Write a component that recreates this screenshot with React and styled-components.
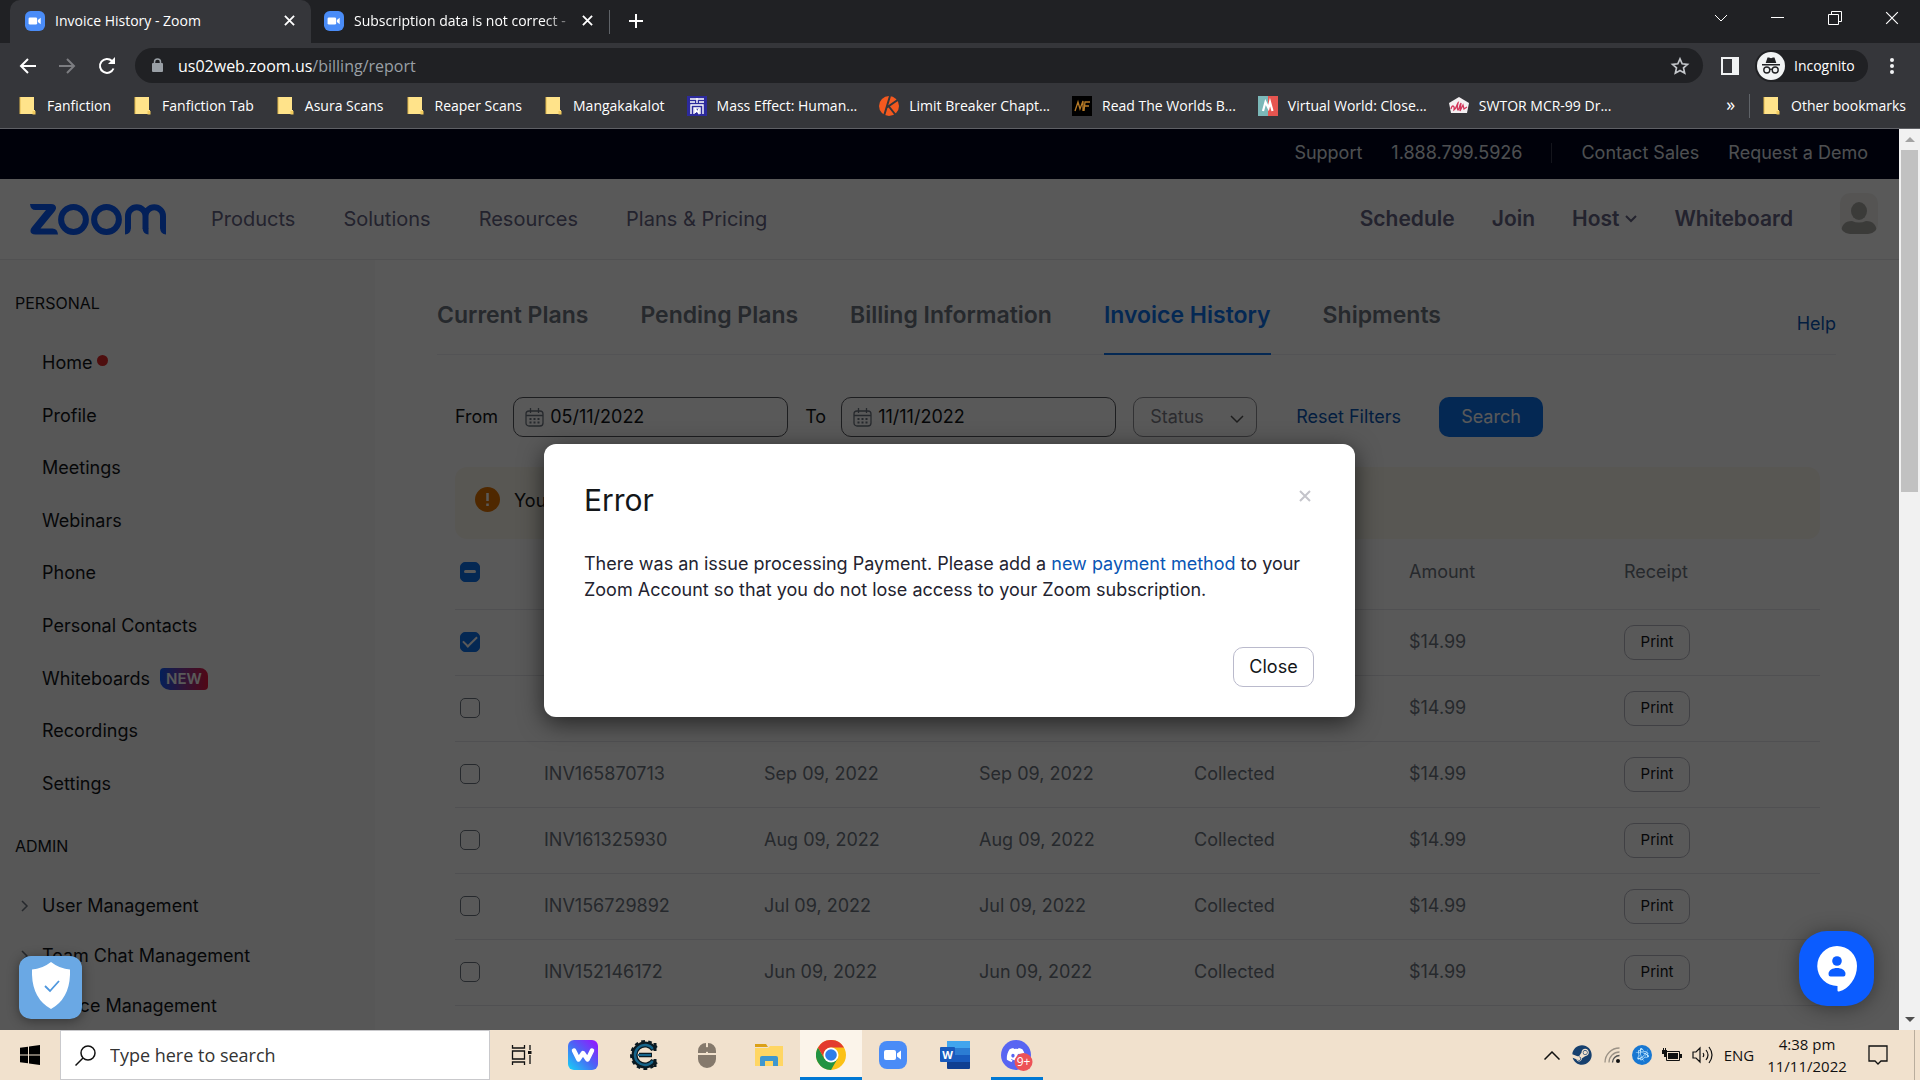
import React, { useEffect, useRef } from 'react'
import styled, { createGlobalStyle, css } from 'styled-components'
import { FaDiscord, FaSteam, FaBattleNet } from 'react-icons/fa'

const GlobalStyle = createGlobalStyle`
    * {
        box-sizing: border-box;
    }

    body {
        margin: 0;
        overflow: hidden;
    }

    button, input, select {
        font: inherit;
        color: inherit;
        margin: 0;
    }

    button {
        background: none;
        border: 0;
        padding: 0;
    }

    a {
        color: inherit;
        text-decoration: none;
    }

    svg {
        display: block;
        flex: none;
    }
`

const Screen = styled.div`
    height: 100vh;
    display: flex;
    flex-direction: column;
    font-family: 'Open Sans', 'Noto Sans', sans-serif;
`

/* ---------- browser ---------- */

const TabStrip = styled.div`
    height: 43px;
    flex: none;
    display: flex;
    align-items: stretch;
    padding-left: 10px;
    background: #202124;
    color: #fff;
    font-size: 14px;
`

const Tab = styled.div`
    width: ${(props) => (props.$active ? 301 : 298)}px;
    display: flex;
    align-items: center;
    gap: 10px;
    padding: 0 14px 2px ${(props) => (props.$active ? 15 : 13)}px;
    border-radius: 10px 10px 0 0;
    background: ${(props) => (props.$active ? '#35363a' : 'transparent')};
`

const TabTitle = styled.span`
    flex: 1;
    min-width: 0;
    overflow: hidden;
    white-space: nowrap;
    ${(props) => props.$fade && css`
        mask-image: linear-gradient(to right, #000 88%, rgba(0, 0, 0, 0.3));
    `}
`

const TabClose = styled.button`
    width: 16px;
    height: 16px;
    display: grid;
    place-items: center;
`

const NewTab = styled.button`
    width: 54px;
    padding-bottom: 2px;
    display: grid;
    place-items: center;
    position: relative;

    &::before {
        content: '';
        position: absolute;
        left: 0;
        top: 10px;
        height: 24px;
        width: 1px;
        background: #5f6368;
    }
`

const WindowControls = styled.div`
    margin-left: auto;
    display: flex;
`

const WindowButton = styled.button`
    width: 57px;
    height: 36px;
    display: grid;
    place-items: center;
`

const Toolbar = styled.div`
    height: 45px;
    flex: none;
    display: flex;
    align-items: center;
    padding: 0 8px 0 7px;
    background: #35363a;
    color: #fff;
`

const ToolButton = styled.button`
    width: 40px;
    height: 32px;
    display: grid;
    place-items: center;
`

const Omnibox = styled.div`
    flex: 1;
    height: 35px;
    margin: 0 18px 0 8px;
    padding: 0 13px 0 17px;
    display: flex;
    align-items: center;
    gap: 15px;
    border-radius: 18px;
    background: #202124;
    font-size: 16px;
    color: #9aa0a6;
`

const Address = styled.span`
    flex: 1;

    b {
        font-weight: 400;
        color: #fff;
    }
`

const Incognito = styled.button`
    height: 32px;
    width: 113px;
    margin: 0 4px 0 16px;
    padding: 0 2px;
    display: flex;
    align-items: center;
    gap: 9px;
    border-radius: 16px;
    background: #202124;
    font-size: 14px;
`

const Bookmarks = styled.div`
    height: 41px;
    flex: none;
    display: flex;
    align-items: center;
    padding: 0 14px 5px 18px;
    border-bottom: 1px solid #5f6065;
    background: #35363a;
    color: #fff;
    font-size: 14px;
`

const Bookmark = styled.a`
    display: flex;
    align-items: center;
    gap: 10px;
    margin-right: 22px;
    white-space: nowrap;

    &:last-child {
        margin-right: 0;
    }
`

const More = styled.button`
    margin-left: auto;
    margin-right: 12px;
    padding: 0 14px 4px;
    height: 24px;
    border-right: 1px solid #5f6368;
    line-height: 18px;
    font-size: 18px;
`

/* ---------- web page ---------- */

const Viewport = styled.div`
    flex: 1;
    min-height: 0;
    display: flex;
`

const Page = styled.div`
    flex: 1;
    min-width: 0;
    position: relative;
    overflow: hidden;
    background: #fff;
    color: #131619;
    font-family: Inter, 'Liberation Sans', sans-serif;
    font-size: 18px;
    line-height: 26px;
`

const TopBar = styled.div`
    height: 50px;
    display: flex;
    align-items: center;
    justify-content: flex-end;
    gap: 29px;
    padding: 0 31px 3px 0;
    background: #00031f;
    color: #dfe3e8;
`

const Divider = styled.span`
    width: 1px;
    height: 20px;
    background: #3a3c50;
`

const Nav = styled.nav`
    height: 81px;
    display: flex;
    align-items: center;
    padding: 0 21px 0 30px;
    border-bottom: 1px solid #e8e8ec;
    background: #fff;
    font-size: 20px;
    color: #666484;
`

const NavLinks = styled.div`
    display: flex;
    gap: 48px;
    margin-left: 44px;
`

const NavActions = styled.div`
    display: flex;
    align-items: center;
    gap: 37px;
    margin-left: auto;
    font-size: 21px;
    font-weight: 600;

    a {
        display: flex;
        align-items: center;
        gap: 6px;
    }
`

const Avatar = styled.button`
    width: 38px;
    height: 41px;
    margin: 0 0 12px 10px;
    border-radius: 10px;
    overflow: hidden;
    background: #f2f1ee;
`

const Columns = styled.div`
    display: flex;
    align-items: stretch;
`

const Sidebar = styled.aside`
    width: 375px;
    flex: none;
    padding-top: 30px;
    background: #f8f8f9;
`

const SideHeading = styled.h2`
    margin: 0;
    padding: 0 15px;
    font-size: 16px;
    font-weight: 400;
    line-height: 26px;
`

const SideList = styled.ul`
    list-style: none;
    margin: ${(props) => (props.$nested ? 22 : 21)}px 0 23px;
    padding: 0;
    display: grid;
    grid-auto-rows: 1fr;
    min-height: ${(props) => (props.$nested ? 150 : 473)}px;
`

const SideItem = styled.li`
    display: grid;
    grid-template-columns: 24px auto auto 1fr;
    align-items: center;
    padding-left: 18px;
`

const Dot = styled.span`
    width: 11px;
    height: 11px;
    margin: 0 0 6px 5px;
    border-radius: 50%;
    background: #e02828;
`

const NewBadge = styled.span`
    margin-left: 10px;
    padding: 0 6px;
    border-radius: 4px 8px 4px 10px;
    background: linear-gradient(90deg, #0b5cff, #8a3a9a 50%, #e8173d);
    color: #fff;
    font-size: 15px;
    font-weight: 600;
    line-height: 22px;
`

const Main = styled.main`
    flex: 1;
    min-width: 0;
    padding: 30px 63px 0 62px;
`

const Tabs = styled.div`
    display: flex;
    gap: 52px;
    height: 65px;
    border-bottom: 1px solid #eeeef2;
    color: #6e7680;
    font-size: 23px;
    font-weight: 600;
    line-height: 50px;

    a {
        height: 65px;
    }
`

const ActiveTab = styled.a`
    border-bottom: 2px solid #0e72ed;
    color: #0e72ed;
`

const HelpLink = styled.a`
    margin-left: auto;
    padding-top: 9px;
    color: #0956b5;
    font-size: 18px;
    font-weight: 400;
`

const Body = styled.div`
    padding: 42px 16px 0 18px;
`

const Filters = styled.form`
    display: flex;
    align-items: center;
    height: 40px;
`

const DateBox = styled.span`
    width: 275px;
    min-width: 0;
    height: 40px;
    margin: 0 17px 0 15px;
    padding-left: 11px;
    display: flex;
    align-items: center;
    gap: 6px;
    border: 1px solid #55565c;
    border-radius: 10px;

    input {
        flex: 1;
        min-width: 0;
        border: 0;
        padding: 0;
        background: none;
        outline: 0;
    }
`

const SelectBox = styled.span`
    width: 124px;
    height: 40px;
    position: relative;
    color: #7c7d86;

    select {
        appearance: none;
        width: 100%;
        height: 100%;
        padding: 0 16px;
        border: 1px solid #909096;
        border-radius: 10px;
        background: none;
    }

    svg {
        position: absolute;
        right: 13px;
        top: 18px;
        color: #555;
    }
`

const Reset = styled.a`
    margin: 0 38px 0 39px;
    color: #0956b5;
`

const SearchButton = styled.button`
    width: 104px;
    height: 40px;
    border-radius: 10px;
    background: #0e72ed;
    color: #fff;
`

const Notice = styled.div`
    height: 72px;
    margin-top: 30px;
    padding: 0 20px 8px;
    display: flex;
    align-items: center;
    gap: 14px;
    border-radius: 12px;
    background: #fdf8ee;

    span {
        padding-top: 4px;
    }
`

const Table = styled.table`
    width: 100%;
    table-layout: fixed;
    border-collapse: collapse;
    color: #6e7680;

    th {
        height: 70px;
        font-weight: 400;
        text-align: left;
        padding: 0 0 4px;
        border-bottom: 1px solid #e4e4ea;
    }

    td {
        height: 66px;
        padding: 0;
        border-bottom: 1px solid #e4e4ea;
    }
`

const Col = styled.col`
    width: ${(props) => props.$width}px;
`

const Checkbox = styled.input.attrs({ type: 'checkbox' })`
    appearance: none;
    display: grid;
    place-items: center;
    width: 20px;
    height: 20px;
    margin-left: 5px;
    border: 1px solid #6e7680;
    border-radius: 5px;

    &:checked,
    &:indeterminate {
        border-color: #0e72ed;
        background: #0e72ed;
    }

    &:checked::after {
        content: '';
        width: 12px;
        height: 6px;
        margin-bottom: 4px;
        border: solid #fff;
        border-width: 0 0 2px 2px;
        transform: rotate(-45deg);
    }

    &:indeterminate::after {
        content: '';
        width: 12px;
        height: 3px;
        margin: 0;
        border: 0;
        border-radius: 2px;
        background: #fff;
        transform: none;
    }
`

const PrintButton = styled.button`
    display: block;
    width: 66px;
    height: 35px;
    border: 1px solid #b8b8c2;
    border-radius: 10px;
    color: #131619;
    font-size: 15px;
`

const Overlay = styled.div`
    position: absolute;
    inset: 0;
    display: flex;
    align-items: flex-start;
    justify-content: center;
    padding-top: 315px;
    background: rgba(0, 0, 0, 0.65);
`

const Dialog = styled.section`
    width: 811px;
    padding: 39px 41px 30px 40px;
    border-radius: 12px;
    background: #fff;
    box-shadow: 0 6px 24px rgba(0, 0, 0, 0.6);

    h1 {
        margin: 0;
        font-size: 30px;
        font-weight: 400;
        line-height: 34px;
    }

    p {
        margin: 34px 0 44px;
        color: #23232f;
    }

    p a {
        color: #0956b5;
    }
`

const DialogHead = styled.header`
    display: flex;
    justify-content: space-between;
    align-items: flex-start;
`

const DialogClose = styled.button`
    width: 18px;
    height: 26px;
    display: grid;
    place-items: center;
    color: #c4c4ca;
`

const CloseButton = styled.button`
    display: block;
    width: 81px;
    height: 40px;
    margin-left: auto;
    border: 1px solid #babacc;
    border-radius: 10px;
`

const ShieldButton = styled.button`
    position: absolute;
    left: 19px;
    bottom: 11px;
    width: 63px;
    height: 63px;
    padding-bottom: 5px;
    display: grid;
    place-items: center;
    border-radius: 12px;
    background: #6aa8e4;
    box-shadow: 0 2px 12px rgba(0, 0, 0, 0.4);
`

const ChatButton = styled.button`
    position: absolute;
    right: 25px;
    bottom: 24px;
    width: 75px;
    height: 75px;
    display: grid;
    place-items: center;
    border-radius: 28px;
    background: #0b5cff;
    box-shadow: 0 2px 20px rgba(0, 0, 0, 0.4);
`

const Scrollbar = styled.div`
    width: 21px;
    flex: none;
    display: grid;
    grid-template-rows: 21px 1fr 21px;
    justify-items: center;
    align-items: center;
    background: #f1f1f1;
`

const Thumb = styled.div`
    align-self: start;
    width: 17px;
    height: 342px;
    background: #c1c1c1;
`

/* ---------- taskbar ---------- */

const Taskbar = styled.footer`
    height: 50px;
    flex: none;
    display: flex;
    align-items: stretch;
    background: #f1e1cd;
    color: #111;
`

const TaskButton = styled.button`
    width: ${(props) => props.$width || 62}px;
    display: grid;
    place-items: center;
    background: ${(props) => (props.$active ? '#fbf4ea' : 'none')};
    box-shadow: ${(props) => (props.$active ? 'inset 0 -3px #0078d4' : 'none')};
`

const RunningMark = styled(TaskButton)`
    width: 52px;
    margin: 0 5px;
    box-shadow: inset 0 -3px #0078d4;
`

const SearchField = styled.label`
    width: 430px;
    display: flex;
    align-items: center;
    gap: 14px;
    padding-left: 14px;
    border: 1px solid #c9c9cc;
    background: #fff;
    font-size: 18px;

    input {
        flex: 1;
        border: 0;
        padding: 0;
        outline: 0;
        background: none;
    }

    input::placeholder {
        color: #333;
    }
`

const Tray = styled.div`
    margin-left: auto;
    display: flex;
    align-items: center;
    font-size: 15px;
`

const TrayButton = styled.button`
    width: ${(props) => props.$width || 30}px;
    display: grid;
    place-items: center;
`

const Clock = styled.div`
    width: 92px;
    margin-right: 10px;
    text-align: center;
    line-height: 22px;
`

const DesktopEdge = styled.div`
    align-self: stretch;
    width: 6px;
    margin-left: 21px;
    border-left: 1px solid #b9ad9d;
`

/* ---------- drawings ---------- */

const ZoomIcon = ({ size }) => (
    <svg width={size} height={size} viewBox="0 0 28 28">
        <rect width="28" height="28" rx="8" fill="#4a8cf7" />
        <rect x="5" y="9" width="12" height="10" rx="2" fill="#fff" />
        <path d="M18 12.5l4-3v9l-4-3z" fill="#fff" />
    </svg>
)

const Cross = ({ size, width = 2 }) => (
    <svg width={size} height={size} viewBox="0 0 12 12" fill="none" stroke="currentColor" strokeWidth={width}>
        <path d="M1 1l10 10M11 1L1 11" />
    </svg>
)

const Chevron = ({ width = 12, stroke = 2 }) => (
    <svg width={width} height={width / 2 + 2} viewBox={`0 0 ${width} ${width / 2 + 2}`} fill="none" stroke="currentColor" strokeWidth={stroke}>
        <path d={`M1 1L${width / 2} ${width / 2}L${width - 1} 1`} />
    </svg>
)

const Folder = () => (
    <svg width="19" height="20" viewBox="0 0 19 20">
        <path d="M2 1h14v13h1v4h-15z" fill="#ffe38a" />
        <path d="M2 18V1" stroke="#e0b84c" />
        <path d="M2 18.5h12.5v-3.5h3v3.5z" fill="#f3cb5e" />
    </svg>
)

const ZoomLogo = () => (
    <svg width="137" height="31" viewBox="0 0 137 31" fill="#0b5cff">
        <path d="M0 0h21c5 0 6.500 4 3.500 7.500L10.500 24.500H22.500q5 0 5.500 6H5.500C0 30.500-1 26.500 2.500 22.500L16 6H5.500Q.5 6 0 0z" />
        <g fill="none" stroke="#0b5cff" strokeWidth="6">
            <circle cx="43.500" cy="15.500" r="12.400" />
            <circle cx="76.500" cy="15.500" r="12.400" />
            <path d="M98 24.500V12a8.750 8.750 0 0 1 17.500 0V24.500M115.500 12a8.750 8.750 0 0 1 17.500 0V24.500" />
        </g>
        <path d="M95 24h6q-.5 6-6 6.500zM112.500 24h6v6.500q-5.500-.5-6-6.500zM130 24h6v6.500q-5.500-.5-6-6.500z" />
    </svg>
)

const Calendar = () => (
    <svg width="19" height="19" viewBox="0 0 19 19" fill="none" stroke="#6e7680" strokeWidth="1.3">
        <rect x="1" y="3" width="17" height="15" rx="3" />
        <path d="M1 7.500h17M5.500 0v5M13.500 0v5" />
        <path d="M4.500 11h2M8.500 11h2M12.500 11h2M4.500 14.500h2M8.500 14.500h2M12.500 14.500h2" strokeWidth="2" />
    </svg>
)

const Gear = () => (
    <svg width="30" height="30" viewBox="0 0 30 30" fill="none">
        <path d="M26 8A13 13 0 1 0 26 22" stroke="#0b1a22" strokeWidth="4" strokeDasharray="3.500 3" />
        <path d="M24 9.500A10.500 10.500 0 1 0 24 20.500" stroke="#0b1a22" strokeWidth="6" />
        <path d="M23 9A10 10 0 1 0 23 21" stroke="#16648a" strokeWidth="2.500" />
        <path d="M9 15h13" stroke="#0b1a22" strokeWidth="4.500" />
        <path d="M8 15h13" stroke="#16648a" strokeWidth="2" />
        <path d="M25 3v8M25 19v8" stroke="#0b1a22" strokeWidth="3" />
    </svg>
)

const Chrome = () => (
    <svg width="30" height="30" viewBox="0 0 30 30">
        <circle cx="15" cy="15" r="15" fill="#fbc116" />
        <path d="M2 7.500A15 15 0 0 0 15 30l6.500-11.200L15 15 8.500 18.700z" fill="#229342" />
        <path d="M2 7.500A15 15 0 0 1 28 7.500H15a7.500 7.500 0 0 0-6.500 11.200z" fill="#e33b2e" />
        <circle cx="15" cy="15" r="7.500" fill="#fff" />
        <circle cx="15" cy="15" r="5.800" fill="#2f7de9" />
    </svg>
)

const Wattpad = () => (
    <svg width="30" height="30" viewBox="0 0 30 30">
        <defs>
            <linearGradient id="wattpad" x1="0" y1="1" x2="1" y2="0">
                <stop offset="0" stopColor="#16d4f5" />
                <stop offset="0.5" stopColor="#4a66f5" />
                <stop offset="1" stopColor="#9a10ff" />
            </linearGradient>
        </defs>
        <rect width="30" height="30" rx="6" fill="url(#wattpad)" />
        <path d="M6 10.500l4.500 9L15 13l4.500 6.500 4.500-9" fill="none" stroke="#fff" strokeWidth="4.500" strokeLinecap="round" strokeLinejoin="round" />
    </svg>
)

const Mouse = () => (
    <svg width="18" height="25" viewBox="0 0 18 25" fill="#85796c">
        <path d="M8 0v10H0V8a8 8 0 0 1 8-8zM10 0a8 8 0 0 1 8 8v2h-8zM0 12h18v4a9 9 0 0 1-18 0z" />
        <rect x="7" y="4" width="4" height="5" rx="2" />
    </svg>
)

const Explorer = () => (
    <svg width="28" height="24" viewBox="0 0 28 24">
        <path d="M0 1h11l2 3h-13z" fill="#dba017" />
        <path d="M0 5h13l2-2h13v20H0z" fill="#ffd663" />
        <path d="M5 23v-8a2 2 0 0 1 2-2h14a2 2 0 0 1 2 2v8h-5v-5h-8v5z" fill="#3f97cf" />
    </svg>
)

const Word = () => (
    <svg width="30" height="28" viewBox="0 0 30 28">
        <rect x="7" width="23" height="28" rx="1" fill="#103f91" />
        <path d="M7 0h23v7H7z" fill="#41a5ee" />
        <path d="M7 7h23v7H7z" fill="#2b7cd3" />
        <path d="M7 14h23v7H7z" fill="#185abd" />
        <rect y="6" width="15" height="15" rx="1" fill="#185abd" />
        <text x="7.500" y="18" fill="#fff" fontSize="11" fontWeight="700" textAnchor="middle" fontFamily="Open Sans">W</text>
    </svg>
)

const Discord = () => (
    <svg width="32" height="31" viewBox="0 0 32 31">
        <circle cx="15" cy="15" r="15" fill="#5865f2" />
        <FaDiscord x="5" y="5" size="20" color="#fff" />
        <circle cx="22.500" cy="22" r="9" fill="#ed5257" />
        <text x="22.500" y="26" fill="#fff" fontSize="12" textAnchor="middle" fontFamily="Open Sans">9+</text>
    </svg>
)

const MassEffect = () => (
    <svg width="20" height="20" viewBox="0 0 20 20" fill="none" stroke="#fff" strokeWidth="1.400">
        <rect width="20" height="20" fill="#2c2a9c" stroke="none" />
        <path d="M3 3h14M3 6h5M12 6h5M10 2v5M4 18V9h12v9M7 18v-6h6v6M8.500 17v-4l3 4v-4" />
    </svg>
)

const Limit = () => (
    <svg width="20" height="20" viewBox="0 0 20 20">
        <circle cx="10" cy="10" r="10" fill="#f4591f" />
        <path d="M11 0L5 20M20 3L7 12M9.500 10l8 10" stroke="#35363a" strokeWidth="2" />
    </svg>
)

const ReadWorlds = () => (
    <svg width="20" height="20" viewBox="0 0 20 20">
        <rect width="20" height="20" fill="#000" />
        <path d="M3 15L6 6l2 7 3-8v10M12 15l1-9h5M13 10h4" fill="none" stroke="#b67a27" strokeWidth="1.300" />
    </svg>
)

const VirtualWorld = () => (
    <svg width="20" height="20" viewBox="0 0 20 20">
        <rect width="10" height="20" fill="#7bb8b8" />
        <rect x="10" width="10" height="20" fill="#e65550" />
        <path d="M5 15L7.500 6 10.500 12 12 6l2.500 9" fill="none" stroke="#fff" strokeWidth="2.200" />
    </svg>
)

const Swtor = () => (
    <svg width="20" height="17" viewBox="0 0 20 17">
        <path d="M10 0l10 6-2 10H2L0 6z" fill="#f4f0f2" />
        <path d="M2 12c1-5 4-3 3 1 2-1 3-6 4-7-1 4-1 6 0 7 2-2 1-4 3-7l-1 8 3-6 1 4 3-2" fill="none" stroke="#d3365b" strokeWidth="1.300" />
    </svg>
)

const IncognitoIcon = () => (
    <svg width="28" height="28" viewBox="0 0 28 28">
        <circle cx="14" cy="14" r="14" fill="#f1f3f4" />
        <path d="M10.500 5.500h1.500l2 .8 2-.8h1.500l1.800 5.500h-10.600zM5 12h18v1.500H5z" fill="#202124" />
        <g fill="none" stroke="#202124" strokeWidth="1.400">
            <circle cx="9.800" cy="18" r="3" />
            <circle cx="18.200" cy="18" r="3" />
            <path d="M12.800 17.500q1.200-.8 2.400 0" />
        </g>
    </svg>
)

/* ---------- data ---------- */

const bookmarks = [
    ['Fanfiction', Folder],
    ['Fanfiction Tab', Folder],
    ['Asura Scans', Folder],
    ['Reaper Scans', Folder],
    ['Mangakakalot', Folder],
    ['Mass Effect: Human...', MassEffect],
    ['Limit Breaker Chapt...', Limit],
    ['Read The Worlds B...', ReadWorlds],
    ['Virtual World: Close...', VirtualWorld],
    ['SWTOR MCR-99 Dr...', Swtor],
]

const personal = ['Home', 'Profile', 'Meetings', 'Webinars', 'Phone', 'Personal Contacts', 'Whiteboards', 'Recordings', 'Settings']
const admin = ['User Management', 'Team Chat Management', 'Device Management']

const invoices = [
    { checked: true },
    {},
    { number: 'INV165870713', date: 'Sep 09, 2022', status: 'Collected' },
    { number: 'INV161325930', date: 'Aug 09, 2022', status: 'Collected' },
    { number: 'INV156729892', date: 'Jul 09, 2022', status: 'Collected' },
    { number: 'INV152146172', date: 'Jun 09, 2022', status: 'Collected' },
]

/* ---------- sections ---------- */

const Browser = () => (
    <>
        <TabStrip>
            <Tab $active>
                <ZoomIcon size={20} />
                <TabTitle>Invoice History - Zoom</TabTitle>
                <TabClose aria-label="Close tab"><Cross size={11} /></TabClose>
            </Tab>
            <Tab>
                <ZoomIcon size={20} />
                <TabTitle $fade>Subscription data is not correct -</TabTitle>
                <TabClose aria-label="Close tab"><Cross size={11} /></TabClose>
            </Tab>
            <NewTab aria-label="New tab">
                <svg width="14" height="14" viewBox="0 0 14 14" stroke="#fff" strokeWidth="2"><path d="M7 0v14M0 7h14" /></svg>
            </NewTab>
            <WindowControls>
                <WindowButton aria-label="Search tabs"><Chevron width={14} stroke={1} /></WindowButton>
                <WindowButton aria-label="Minimize">
                    <svg width="13" height="2"><rect width="13" height="1" fill="#fff" /></svg>
                </WindowButton>
                <WindowButton aria-label="Restore">
                    <svg width="14" height="14" viewBox="0 0 14 14" fill="none" stroke="#fff"><path d="M.5 3.500h10v10H.5zM3.500 3V.5h10v10H11" /></svg>
                </WindowButton>
                <WindowButton aria-label="Close"><Cross size={14} width={1} /></WindowButton>
            </WindowControls>
        </TabStrip>
        <Toolbar>
            <ToolButton aria-label="Back">
                <svg width="17" height="16" viewBox="0 0 17 16" fill="none" stroke="#fff" strokeWidth="2"><path d="M17 8H2M9 1L2 8l7 7" /></svg>
            </ToolButton>
            <ToolButton aria-label="Forward">
                <svg width="17" height="16" viewBox="0 0 17 16" fill="none" stroke="#7c7d81" strokeWidth="2"><path d="M0 8h15M8 1l7 7-7 7" /></svg>
            </ToolButton>
            <ToolButton aria-label="Reload">
                <svg width="18" height="18" viewBox="0 0 18 18" fill="none" stroke="#fff" strokeWidth="2"><path d="M15.500 11.500A7 7 0 1 1 14 4l2 2" /><path d="M17 0v7h-7z" fill="#fff" stroke="none" /></svg>
            </ToolButton>
            <Omnibox>
                <svg width="11" height="15" viewBox="0 0 11 15"><path d="M2.500 6V4a3 3 0 0 1 6 0v2" fill="none" stroke="#9aa0a6" strokeWidth="1.500" /><rect y="5" width="11" height="9" rx="1" fill="#9aa0a6" /></svg>
                <Address><b>us02web.zoom.us</b>/billing/report</Address>
                <svg width="20" height="20" viewBox="0 0 24 24" fill="none" stroke="#c4c7cb" strokeWidth="2"><path d="M12 3.500l2.600 5.900 6.400.6-4.800 4.300 1.400 6.300-5.600-3.300-5.600 3.300 1.400-6.300L3 10l6.400-.6z" /></svg>
            </Omnibox>
            <svg width="18" height="18" viewBox="0 0 18 18"><rect x="1" y="1" width="16" height="16" fill="none" stroke="#f1f3f4" strokeWidth="2" /><rect x="11" y="1" width="6" height="16" fill="#f1f3f4" /></svg>
            <Incognito><IncognitoIcon />Incognito</Incognito>
            <ToolButton aria-label="Menu">
                <svg width="4" height="16" viewBox="0 0 4 16" fill="#f1f3f4"><circle cx="2" cy="2" r="2" /><circle cx="2" cy="8" r="2" /><circle cx="2" cy="14" r="2" /></svg>
            </ToolButton>
        </Toolbar>
        <Bookmarks>
            {bookmarks.map(([name, Icon]) => (
                <Bookmark href="#" key={name}><Icon />{name}</Bookmark>
            ))}
            <More aria-label="More bookmarks">»</More>
            <Bookmark href="#"><Folder />Other bookmarks</Bookmark>
        </Bookmarks>
    </>
)

const InvoiceTable = () => {
    const all = useRef(null)

    useEffect(() => {
        all.current.indeterminate = true
    }, [])

    return (
        <Table>
            <colgroup>
                <Col $width={89} />
                <Col $width={220} />
                <Col $width={215} />
                <Col $width={215} />
                <Col $width={215} />
                <Col $width={215} />
                <Col $width={196} />
            </colgroup>
            <thead>
                <tr>
                    <th><Checkbox ref={all} aria-label="Select all" /></th>
                    <th /><th /><th /><th />
                    <th>Amount</th>
                    <th>Receipt</th>
                </tr>
            </thead>
            <tbody>
                {invoices.map((invoice, i) => (
                    <tr key={i}>
                        <td><Checkbox defaultChecked={invoice.checked} aria-label="Select invoice" /></td>
                        <td>{invoice.number}</td>
                        <td>{invoice.date}</td>
                        <td>{invoice.date}</td>
                        <td>{invoice.status}</td>
                        <td>$14.99</td>
                        <td><PrintButton>Print</PrintButton></td>
                    </tr>
                ))}
            </tbody>
        </Table>
    )
}

const Content = () => (
    <Main>
        <Tabs>
            <a href="#">Current Plans</a>
            <a href="#">Pending Plans</a>
            <a href="#">Billing Information</a>
            <ActiveTab href="#">Invoice History</ActiveTab>
            <a href="#">Shipments</a>
            <HelpLink href="#">Help</HelpLink>
        </Tabs>
        <Body>
            <Filters>
                <label htmlFor="from">From</label>
                <DateBox><Calendar /><input id="from" defaultValue="05/11/2022" /></DateBox>
                <label htmlFor="to">To</label>
                <DateBox><Calendar /><input id="to" defaultValue="11/11/2022" /></DateBox>
                <SelectBox>
                    <select aria-label="Status"><option>Status</option></select>
                    <Chevron width={14} stroke={1.5} />
                </SelectBox>
                <Reset href="#">Reset Filters</Reset>
                <SearchButton type="button">Search</SearchButton>
            </Filters>
            <Notice>
                <svg width="25" height="25" viewBox="0 0 25 25">
                    <circle cx="12.500" cy="12.500" r="12.500" fill="#e27400" />
                    <path d="M12.500 6v8M12.500 16.500v2.500" stroke="#fff" strokeWidth="2.500" />
                </svg>
                <span>You</span>
            </Notice>
            <InvoiceTable />
        </Body>
    </Main>
)

const App = () => (
    <Screen>
        <GlobalStyle />
        <Browser />
        <Viewport>
            <Page>
                <TopBar>
                    <a href="#">Support</a>
                    <a href="#">1.888.799.5926</a>
                    <Divider />
                    <a href="#">Contact Sales</a>
                    <a href="#">Request a Demo</a>
                </TopBar>
                <Nav>
                    <a href="#" aria-label="Zoom"><ZoomLogo /></a>
                    <NavLinks>
                        <a href="#">Products</a>
                        <a href="#">Solutions</a>
                        <a href="#">Resources</a>
                        <a href="#">Plans &amp; Pricing</a>
                    </NavLinks>
                    <NavActions>
                        <a href="#">Schedule</a>
                        <a href="#">Join</a>
                        <a href="#">Host <Chevron width={12} /></a>
                        <a href="#">Whiteboard</a>
                        <Avatar aria-label="Account">
                            <svg width="38" height="41" viewBox="0 0 38 41" fill="#a9a8a4"><ellipse cx="19" cy="18" rx="8" ry="9" /><path d="M1 41q0-13 11-13 7 3 14 0 11 0 11 13z" /></svg>
                        </Avatar>
                    </NavActions>
                </Nav>
                <Columns>
                    <Sidebar>
                        <SideHeading>PERSONAL</SideHeading>
                        <SideList>
                            {personal.map((name) => (
                                <SideItem key={name}>
                                    <span />
                                    <a href="#">{name}</a>
                                    {name === 'Home' && <Dot />}
                                    {name === 'Whiteboards' && <NewBadge>NEW</NewBadge>}
                                </SideItem>
                            ))}
                        </SideList>
                        <SideHeading>ADMIN</SideHeading>
                        <SideList $nested>
                            {admin.map((name) => (
                                <SideItem key={name}>
                                    <svg width="12" height="12" viewBox="0 0 12 12" fill="none" stroke="#6e7680" strokeWidth="1.500"><path d="M4 1l5 5-5 5" /></svg>
                                    <a href="#">{name}</a>
                                </SideItem>
                            ))}
                        </SideList>
                    </Sidebar>
                    <Content />
                </Columns>
                <Overlay>
                    <Dialog role="dialog" aria-labelledby="dialog-title">
                        <DialogHead>
                            <h1 id="dialog-title">Error</h1>
                            <DialogClose aria-label="Dismiss"><Cross size={12} /></DialogClose>
                        </DialogHead>
                        <p>
                            There was an issue processing Payment. Please add a <a href="#">new payment method</a> to your
                            Zoom Account so that you do not lose access to your Zoom subscription.
                        </p>
                        <CloseButton>Close</CloseButton>
                    </Dialog>
                </Overlay>
                <ShieldButton aria-label="Privacy">
                    <svg width="38" height="47" viewBox="0 0 38 47">
                        <path d="M19 0q9 7 19 7.500Q39 36 19 47-1 36 0 7.500 10 7 19 0z" fill="#fff" />
                        <path d="M13 24l5 5 9-10" fill="none" stroke="#4f97de" strokeWidth="1.800" />
                    </svg>
                </ShieldButton>
                <ChatButton aria-label="Chat">
                    <svg width="40" height="46" viewBox="0 0 40 46">
                        <path d="M20 0a20 20 0 0 1 20 20c0 12-8 23-18 25.500q-1.500.3-1.500-1V40A20 20 0 0 1 20 0z" fill="#fff" />
                        <circle cx="20" cy="15" r="4.800" fill="#0b5cff" />
                        <path d="M11.500 28c0-8 17-8 17 0q0 2.500-2 2.500h-13q-2 0-2-2.500z" fill="#0b5cff" />
                    </svg>
                </ChatButton>
            </Page>
            <Scrollbar>
                <svg width="10" height="5"><path d="M5 0l5 5H0z" fill="#a3a3a3" /></svg>
                <Thumb />
                <svg width="10" height="5"><path d="M0 0h10L5 5z" fill="#505050" /></svg>
            </Scrollbar>
        </Viewport>
        <Taskbar>
            <TaskButton $width={60} aria-label="Start">
                <svg width="20" height="20" viewBox="0 0 20 20"><path d="M0 2.800l8-1.100v7.800H0zM9 1.600L20 0v9.500H9zM0 10.500h8v7.800l-8-1.100zM9 10.500h11V20L9 18.400z" /></svg>
            </TaskButton>
            <SearchField>
                <svg width="21" height="21" viewBox="0 0 21 21" fill="none" stroke="#111" strokeWidth="1.500"><circle cx="13" cy="8" r="7" /><path d="M8 13l-7.500 7.500" /></svg>
                <input placeholder="Type here to search" aria-label="Search" />
            </SearchField>
            <TaskButton aria-label="Task view">
                <svg width="21" height="20" viewBox="0 0 21 20" fill="none" stroke="#111" strokeWidth="1.300"><path d="M1.500 0v3h12V0M1.500 20v-3h12v3M1.500 6h12v8h-12zM19 0v5M19 10v9" /><path d="M17 6h3.500v3H17z" fill="#111" stroke="none" /></svg>
            </TaskButton>
            <TaskButton aria-label="Wattpad"><Wattpad /></TaskButton>
            <TaskButton aria-label="Cheat Engine"><Gear /></TaskButton>
            <TaskButton aria-label="Mouse"><Mouse /></TaskButton>
            <TaskButton aria-label="File Explorer"><Explorer /></TaskButton>
            <TaskButton $active aria-label="Chrome"><Chrome /></TaskButton>
            <TaskButton aria-label="Zoom"><ZoomIcon size={28} /></TaskButton>
            <TaskButton aria-label="Word"><Word /></TaskButton>
            <RunningMark aria-label="Discord"><Discord /></RunningMark>
            <Tray>
                <TrayButton aria-label="Hidden icons">
                    <svg width="16" height="9" viewBox="0 0 16 9" fill="none" stroke="#111" strokeWidth="1.500"><path d="M.5 8.500L8 1l7.500 7.500" /></svg>
                </TrayButton>
                <TrayButton aria-label="Steam"><FaSteam size={20} color="#17406e" /></TrayButton>
                <TrayButton aria-label="Network">
                    <svg width="16" height="16" viewBox="0 0 16 16" fill="none" stroke="#9b9286" strokeWidth="1.300">
                        <path d="M1 15.500A14.500 14.500 0 0 1 15.500 1M5 15.500A10.500 10.500 0 0 1 15.500 5" />
                        <path d="M8.500 15.500a7 7 0 0 1 7-7" stroke="#555" />
                        <circle cx="14" cy="14" r="2" fill="#111" stroke="none" />
                    </svg>
                </TrayButton>
                <TrayButton aria-label="Battle.net">
                    <svg width="20" height="20" viewBox="0 0 20 20"><circle cx="10" cy="10" r="10" fill="#1777d2" /><FaBattleNet x="3" y="3" size="14" color="#c9ecff" /></svg>
                </TrayButton>
                <TrayButton aria-label="Battery">
                    <svg width="20" height="14" viewBox="0 0 20 14"><path d="M4.500 3.500h13v9h-13z" fill="none" stroke="#111" /><path d="M6 5h10v6H6zM18 6h2v4h-2zM0 2h5v4H4v3H2V6H0zM1 0h1v2H1zM3 0h1v2H3z" fill="#111" /></svg>
                </TrayButton>
                <TrayButton aria-label="Volume">
                    <svg width="21" height="18" viewBox="0 0 21 18" fill="none" stroke="#111" strokeWidth="1.200"><path d="M1 6h3l4-4v14l-4-4H1zM11 7q1.500 2 0 4M14 4q4 5 0 10M17 1q6 8 0 16" /></svg>
                </TrayButton>
                <TrayButton $width={44}>ENG</TrayButton>
                <Clock>4:38 pm<br />11/11/2022</Clock>
                <TrayButton aria-label="Notifications">
                    <svg width="20" height="20" viewBox="0 0 20 20" fill="none" stroke="#111" strokeWidth="1.300"><path d="M1 1h18v15h-6l-3 3-3-3H1z" /></svg>
                </TrayButton>
                <DesktopEdge />
            </Tray>
        </Taskbar>
    </Screen>
)

export default App
